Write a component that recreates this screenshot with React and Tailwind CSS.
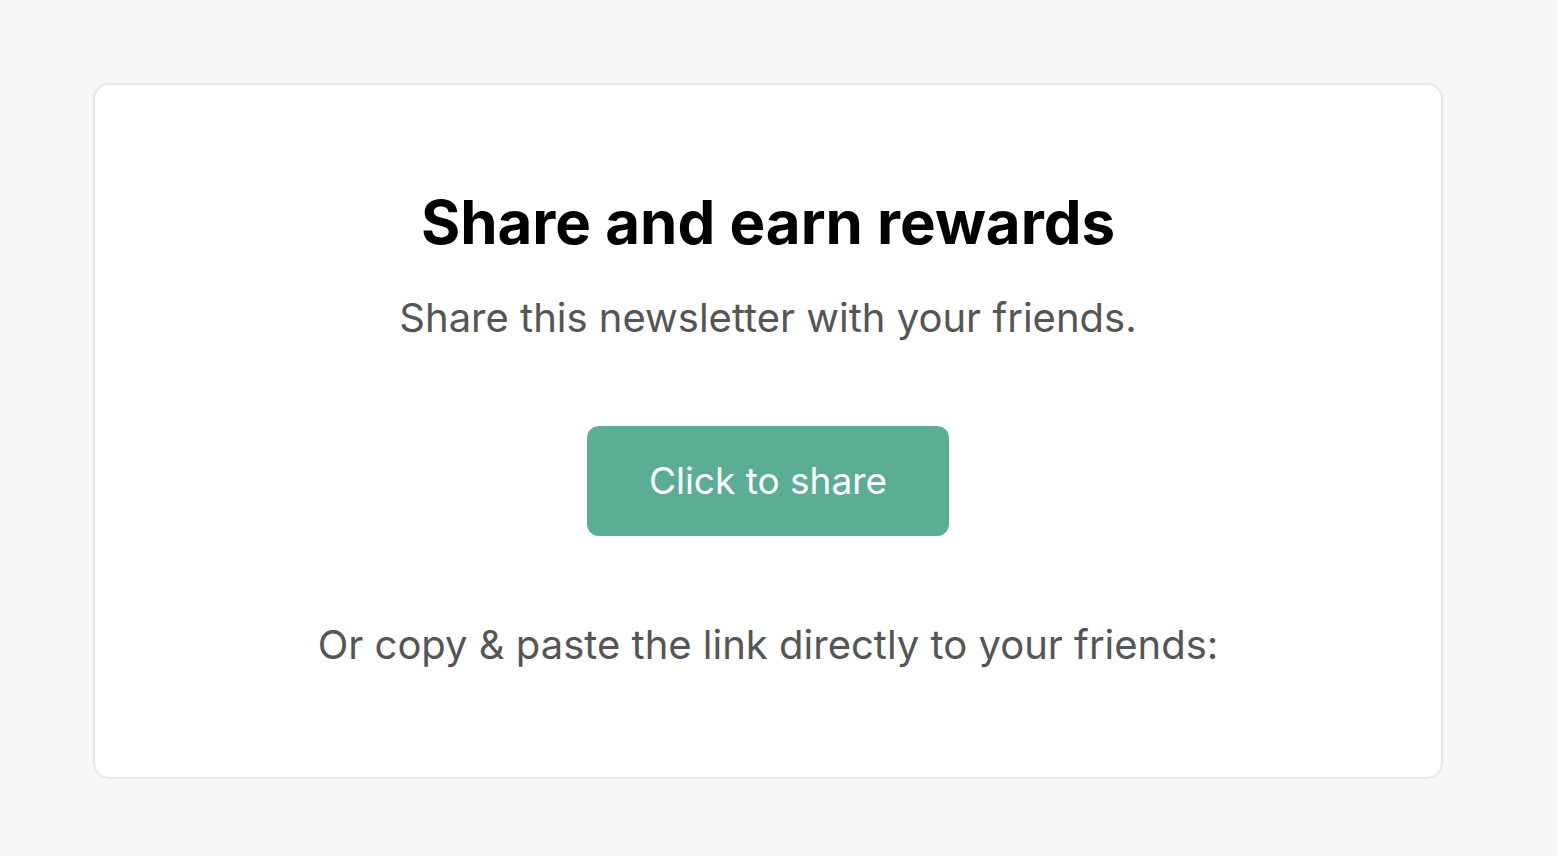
export default function App() {
  return (
    <div className="min-h-[856px] w-full bg-[#f6f7f9] pt-[83px] pl-[93px]" style={{ fontFamily: 'Inter, "Noto Sans", sans-serif' }}>
      <div className="w-[1350px] h-[696px] rounded-[16px] border-2 border-[#e8e8e8] bg-white flex flex-col items-center pt-[101px]">
        <h1 className="text-[60px] leading-[72px] font-bold text-black">Share and earn rewards</h1>
        <p className="mt-[36px] text-[40px] leading-[48px] text-[#555555]">Share this newsletter with your friends.</p>
        <button className="mt-[84px] w-[362px] h-[110px] rounded-[12px] bg-[#5bae94] text-white text-[37px] leading-[44px] flex items-center justify-center">Click to share</button>
        <p className="mt-[85px] text-[40px] leading-[48px] text-[#555555]">Or copy &amp; paste the link directly to your friends:</p>
      </div>
    </div>
  );
}
